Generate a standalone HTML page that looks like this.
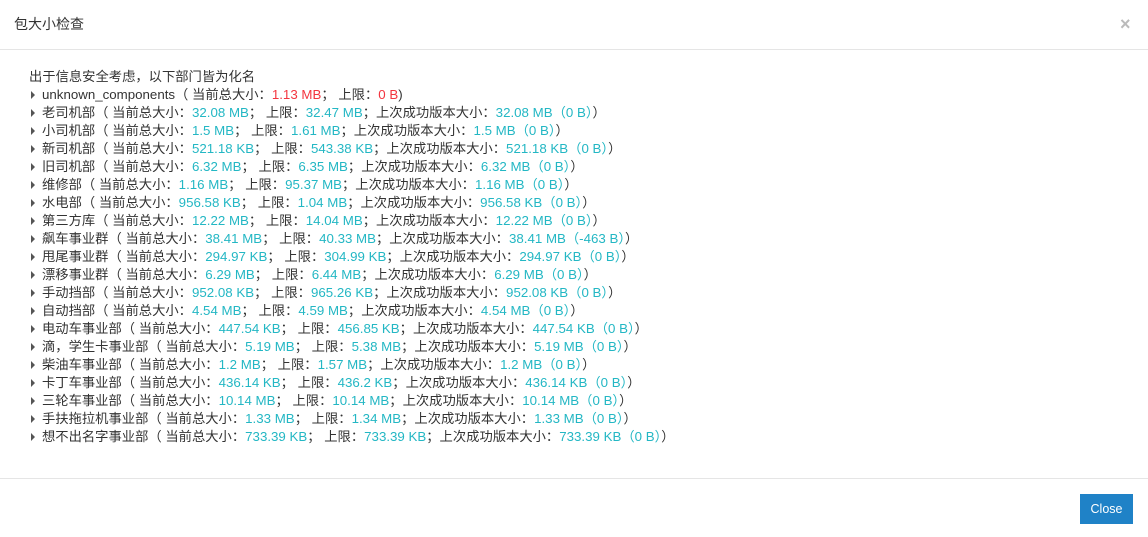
<!DOCTYPE html>
<html><head><meta charset="utf-8"><style>
html,body{margin:0;padding:0;background:#fff;width:1148px;height:537px;overflow:hidden;font-family:"Liberation Sans","Noto Sans CJK SC",sans-serif;color:#333;}
.hd{position:absolute;left:0;top:0;width:1148px;height:49px;border-bottom:1px solid #e5e5e5;}
.hd h4{margin:0;position:absolute;left:14px;top:14px;font-size:14px;font-weight:normal;color:#333;line-height:20px;}
.x{position:absolute;left:1120px;top:14px;font-size:18px;font-weight:bold;color:#bbb;line-height:20px;}
.bd{position:absolute;left:29px;top:68px;font-size:13.3px;line-height:18px;}
.r{position:relative;padding-left:13px;white-space:nowrap;}
.r:before{content:"";position:absolute;left:2px;top:5px;border-left:4px solid #555;border-top:4px solid transparent;border-bottom:4px solid transparent;}
.t{color:#23b7c4}.e{color:#f3353f}
.ft{position:absolute;left:0;top:478px;width:1148px;border-top:1px solid #e5e5e5;}
.btn{position:absolute;left:1080px;top:494px;width:53px;height:30px;background:#1f82c7;color:#fff;font-size:12.5px;line-height:30px;text-align:center;}
</style></head><body>
<div class="hd"><h4>包大小检查</h4><div class="x">×</div></div>
<div class="bd">
<div>出于信息安全考虑，以下部门皆为化名</div>
<div class="r">unknown_components（ 当前总大小：<span class="e">1.13 MB</span>； 上限：<span class="e">0 B</span>)</div>
<div class="r">老司机部（ 当前总大小：<span class="t">32.08 MB</span>； 上限：<span class="t">32.47 MB</span>；上次成功版本大小：<span class="t">32.08 MB（0 B）</span>）</div>
<div class="r">小司机部（ 当前总大小：<span class="t">1.5 MB</span>； 上限：<span class="t">1.61 MB</span>；上次成功版本大小：<span class="t">1.5 MB（0 B）</span>）</div>
<div class="r">新司机部（ 当前总大小：<span class="t">521.18 KB</span>； 上限：<span class="t">543.38 KB</span>；上次成功版本大小：<span class="t">521.18 KB（0 B）</span>）</div>
<div class="r">旧司机部（ 当前总大小：<span class="t">6.32 MB</span>； 上限：<span class="t">6.35 MB</span>；上次成功版本大小：<span class="t">6.32 MB（0 B）</span>）</div>
<div class="r">维修部（ 当前总大小：<span class="t">1.16 MB</span>； 上限：<span class="t">95.37 MB</span>；上次成功版本大小：<span class="t">1.16 MB（0 B）</span>）</div>
<div class="r">水电部（ 当前总大小：<span class="t">956.58 KB</span>； 上限：<span class="t">1.04 MB</span>；上次成功版本大小：<span class="t">956.58 KB（0 B）</span>）</div>
<div class="r">第三方库（ 当前总大小：<span class="t">12.22 MB</span>； 上限：<span class="t">14.04 MB</span>；上次成功版本大小：<span class="t">12.22 MB（0 B）</span>）</div>
<div class="r">飙车事业群（ 当前总大小：<span class="t">38.41 MB</span>； 上限：<span class="t">40.33 MB</span>；上次成功版本大小：<span class="t">38.41 MB（-463 B）</span>）</div>
<div class="r">甩尾事业群（ 当前总大小：<span class="t">294.97 KB</span>； 上限：<span class="t">304.99 KB</span>；上次成功版本大小：<span class="t">294.97 KB（0 B）</span>）</div>
<div class="r">漂移事业群（ 当前总大小：<span class="t">6.29 MB</span>； 上限：<span class="t">6.44 MB</span>；上次成功版本大小：<span class="t">6.29 MB（0 B）</span>）</div>
<div class="r">手动挡部（ 当前总大小：<span class="t">952.08 KB</span>； 上限：<span class="t">965.26 KB</span>；上次成功版本大小：<span class="t">952.08 KB（0 B）</span>）</div>
<div class="r">自动挡部（ 当前总大小：<span class="t">4.54 MB</span>； 上限：<span class="t">4.59 MB</span>；上次成功版本大小：<span class="t">4.54 MB（0 B）</span>）</div>
<div class="r">电动车事业部（ 当前总大小：<span class="t">447.54 KB</span>； 上限：<span class="t">456.85 KB</span>；上次成功版本大小：<span class="t">447.54 KB（0 B）</span>）</div>
<div class="r">滴，学生卡事业部（ 当前总大小：<span class="t">5.19 MB</span>； 上限：<span class="t">5.38 MB</span>；上次成功版本大小：<span class="t">5.19 MB（0 B）</span>）</div>
<div class="r">柴油车事业部（ 当前总大小：<span class="t">1.2 MB</span>； 上限：<span class="t">1.57 MB</span>；上次成功版本大小：<span class="t">1.2 MB（0 B）</span>）</div>
<div class="r">卡丁车事业部（ 当前总大小：<span class="t">436.14 KB</span>； 上限：<span class="t">436.2 KB</span>；上次成功版本大小：<span class="t">436.14 KB（0 B）</span>）</div>
<div class="r">三轮车事业部（ 当前总大小：<span class="t">10.14 MB</span>； 上限：<span class="t">10.14 MB</span>；上次成功版本大小：<span class="t">10.14 MB（0 B）</span>）</div>
<div class="r">手扶拖拉机事业部（ 当前总大小：<span class="t">1.33 MB</span>； 上限：<span class="t">1.34 MB</span>；上次成功版本大小：<span class="t">1.33 MB（0 B）</span>）</div>
<div class="r">想不出名字事业部（ 当前总大小：<span class="t">733.39 KB</span>； 上限：<span class="t">733.39 KB</span>；上次成功版本大小：<span class="t">733.39 KB（0 B）</span>）</div>
</div>
<div class="ft"></div>
<div class="btn">Close</div>
</body></html>
